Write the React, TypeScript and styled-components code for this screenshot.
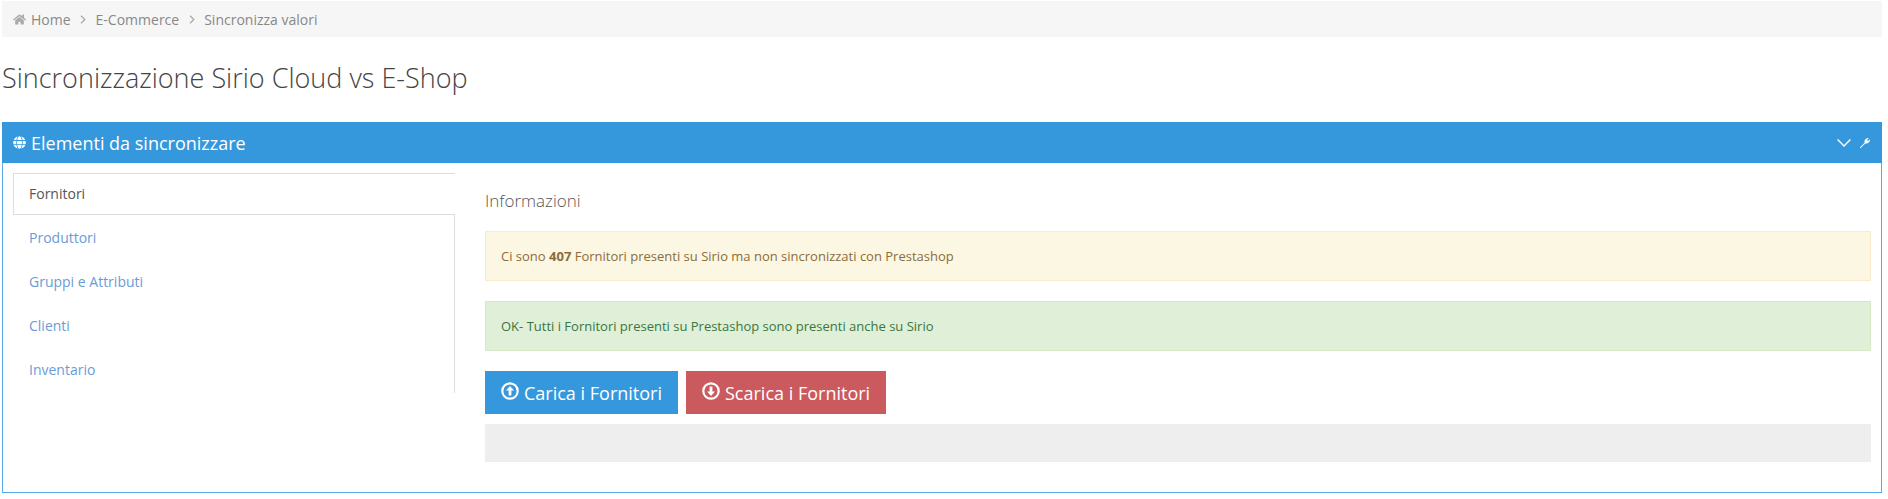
import React from "react";
import styled, { createGlobalStyle } from "styled-components";
import { FaHome, FaGlobe } from "react-icons/fa";

const Global = createGlobalStyle`
    html, body { margin: 0; padding: 0; background: #fff; }
    body { font-family: "Open Sans", "Liberation Sans", sans-serif; color: #333; font-size: 13px; }
`;

const Page = styled.div`
    width: 1888px;
    height: 499px;
    padding: 1px 6px 0 2px;
    box-sizing: border-box;
    overflow: hidden;
`;

// breadcrumb in alto
const Crumbs = styled.ul`
    display: flex;
    align-items: center;
    margin: 0;
    padding: 0 0 0 11px;
    height: 36px;
    list-style: none;
    background: #f6f6f6;
    color: #888;
    font-size: 14px;
`;
const Crumb = styled.li`
    display: flex;
    align-items: center;
    svg { color: #aaa; margin-right: 5px; }
`;
const Sep = styled.span`
    display: flex;
    width: 25px;
    justify-content: center;
`;
const Title = styled.h1`
    margin: 24px 0 0;
    height: 61px;
    font-size: 27px;
    line-height: 33px;
    font-weight: 300;
    color: #444;
`;

const Panel = styled.section`
    border: 1px solid #5aaaea;
    border-top: 0;
    height: 371px;
    box-sizing: border-box;
`;
const PanelHead = styled.header`
    display: flex;
    align-items: center;
    justify-content: space-between;
    height: 41px;
    margin: 0 -1px;
    padding: 0 11px;
    background: #3598dc;
    color: #fff;
    font-size: 18px;
`;
const PanelTitle = styled.div`
    display: flex;
    align-items: center;
    gap: 5px;
`;
const Tools = styled.div`
    display: flex;
    align-items: center;
    gap: 8px;
`;
const PanelBody = styled.div`
    display: flex;
    padding: 10px 10px 0 10px;
`;

const Nav = styled.nav`
    width: 442px;
    height: 220px;
    box-sizing: border-box;
    border-right: 1px solid #ddd;
    flex: none;
`;
const NavItem = styled.a<{ $active?: boolean }>`
    display: block;
    box-sizing: border-box;
    height: ${(p) => (p.$active ? "42px" : "44px")};
    line-height: ${(p) => (p.$active ? "40px" : "45px")};
    padding-left: ${(p) => (p.$active ? "15px" : "16px")};
    font-size: 14px;
    color: ${(p) => (p.$active ? "#555" : "#6a9bd8")};
    ${(p) =>
        p.$active &&
        `
        border: 1px solid #ddd;
        border-right: 0;
        margin-right: -1px;
        background: #fff;
        position: relative;
    `}
`;

const Content = styled.div`
    flex: 1;
    margin-left: 30px;
    min-width: 0;
`;
const Heading = styled.h4`
    margin: 16px 0 0;
    height: 42px;
    font-size: 17px;
    line-height: 24px;
    font-weight: 300;
    color: #555;
`;
const Alert = styled.div<{ $kind: "warning" | "success" }>`
    box-sizing: border-box;
    height: 50px;
    margin-bottom: 20px;
    padding: 0 15px;
    line-height: 49px;
    font-size: 13px;
    border: 1px solid ${(p) => (p.$kind === "warning" ? "#faebcc" : "#d6e9c6")};
    background: ${(p) => (p.$kind === "warning" ? "#fcf7e3" : "#dfefd8")};
    color: ${(p) => (p.$kind === "warning" ? "#8a6d3b" : "#3c763d")};
    b { font-weight: 700; }
`;
const Buttons = styled.div`
    display: flex;
    gap: 8px;
`;
const Btn = styled.button<{ $color: string; $width: number }>`
    display: flex;
    align-items: center;
    gap: 5px;
    width: ${(p) => p.$width}px;
    height: 43px;
    padding: 0 0 0 16px;
    border: 0;
    background: ${(p) => p.$color};
    color: #fff;
    font: 400 18px "Open Sans", "Liberation Sans", sans-serif;
    svg { margin-top: -3px; }
`;
const Progress = styled.div`
    height: 38px;
    margin-top: 10px;
    background: #eee;
`;

const CrumbArrow = () => (
    <svg width="6" height="9" viewBox="0 0 6 9" fill="none" stroke="#aaa" strokeWidth="1.3">
        <path d="M1 .8L4.8 4.5 1 8.2" />
    </svg>
);

// chiave inglese sottile dell'header
const Wrench = () => (
    <svg width="12" height="12" viewBox="0 0 12 12" fill="#fff">
        <path d="M1.5 11.2L.8 10.5 5.6 5.7 C5 3.4 6.9 .7 9.8 1 L8 2.9 9.1 4 10.9 2.2 C11.3 5 8.6 7 6.3 6.4z" />
    </svg>
);

// freccia dentro il cerchio, verso l'alto o verso il basso
const CircleArrow: React.FC<{ down?: boolean }> = ({ down }) => (
    <svg width="18" height="18" viewBox="0 0 18 18">
        <circle cx="9" cy="9" r="7.7" fill="none" stroke="#fff" strokeWidth="2.2" />
        <path
            d="M9 4L13 8.4 10.4 8.4 10.4 13.6 7.6 13.6 7.6 8.4 5 8.4z"
            fill="#fff"
            transform={down ? "rotate(180 9 9)" : undefined}
        />
    </svg>
);

const App: React.FC = () => {
    return (
        <Page>
            <Global />
            <Crumbs>
                <Crumb>
                    <FaHome size={13} />
                    Home
                </Crumb>
                <Sep>
                    <CrumbArrow />
                </Sep>
                <Crumb>E-Commerce</Crumb>
                <Sep>
                    <CrumbArrow />
                </Sep>
                <Crumb>Sincronizza valori</Crumb>
            </Crumbs>
            <Title>Sincronizzazione Sirio Cloud vs E-Shop</Title>
            <Panel>
                <PanelHead>
                    <PanelTitle>
                        <FaGlobe size={13} />
                        Elementi da sincronizzare
                    </PanelTitle>
                    <Tools>
                        <svg width="14" height="8" viewBox="0 0 14 8" fill="none" stroke="#fff" strokeWidth="1.4">
                            <path d="M.6.6L7 7l6.4-6.4" />
                        </svg>
                        <Wrench />
                    </Tools>
                </PanelHead>
                <PanelBody>
                    <Nav>
                        <NavItem $active>Fornitori</NavItem>
                        <NavItem>Produttori</NavItem>
                        <NavItem>Gruppi e Attributi</NavItem>
                        <NavItem>Clienti</NavItem>
                        <NavItem>Inventario</NavItem>
                    </Nav>
                    <Content>
                        <Heading>Informazioni</Heading>
                        <Alert $kind="warning">
                            Ci sono <b>407</b> Fornitori presenti su Sirio ma non sincronizzati con Prestashop
                        </Alert>
                        <Alert $kind="success">OK- Tutti i Fornitori presenti su Prestashop sono presenti anche su Sirio</Alert>
                        <Buttons>
                            <Btn $color="#3598dc" $width={193}>
                                <CircleArrow />
                                Carica i Fornitori
                            </Btn>
                            <Btn $color="#cb5a5e" $width={200}>
                                <CircleArrow down />
                                Scarica i Fornitori
                            </Btn>
                        </Buttons>
                        <Progress />
                    </Content>
                </PanelBody>
            </Panel>
        </Page>
    );
};

export default App;
